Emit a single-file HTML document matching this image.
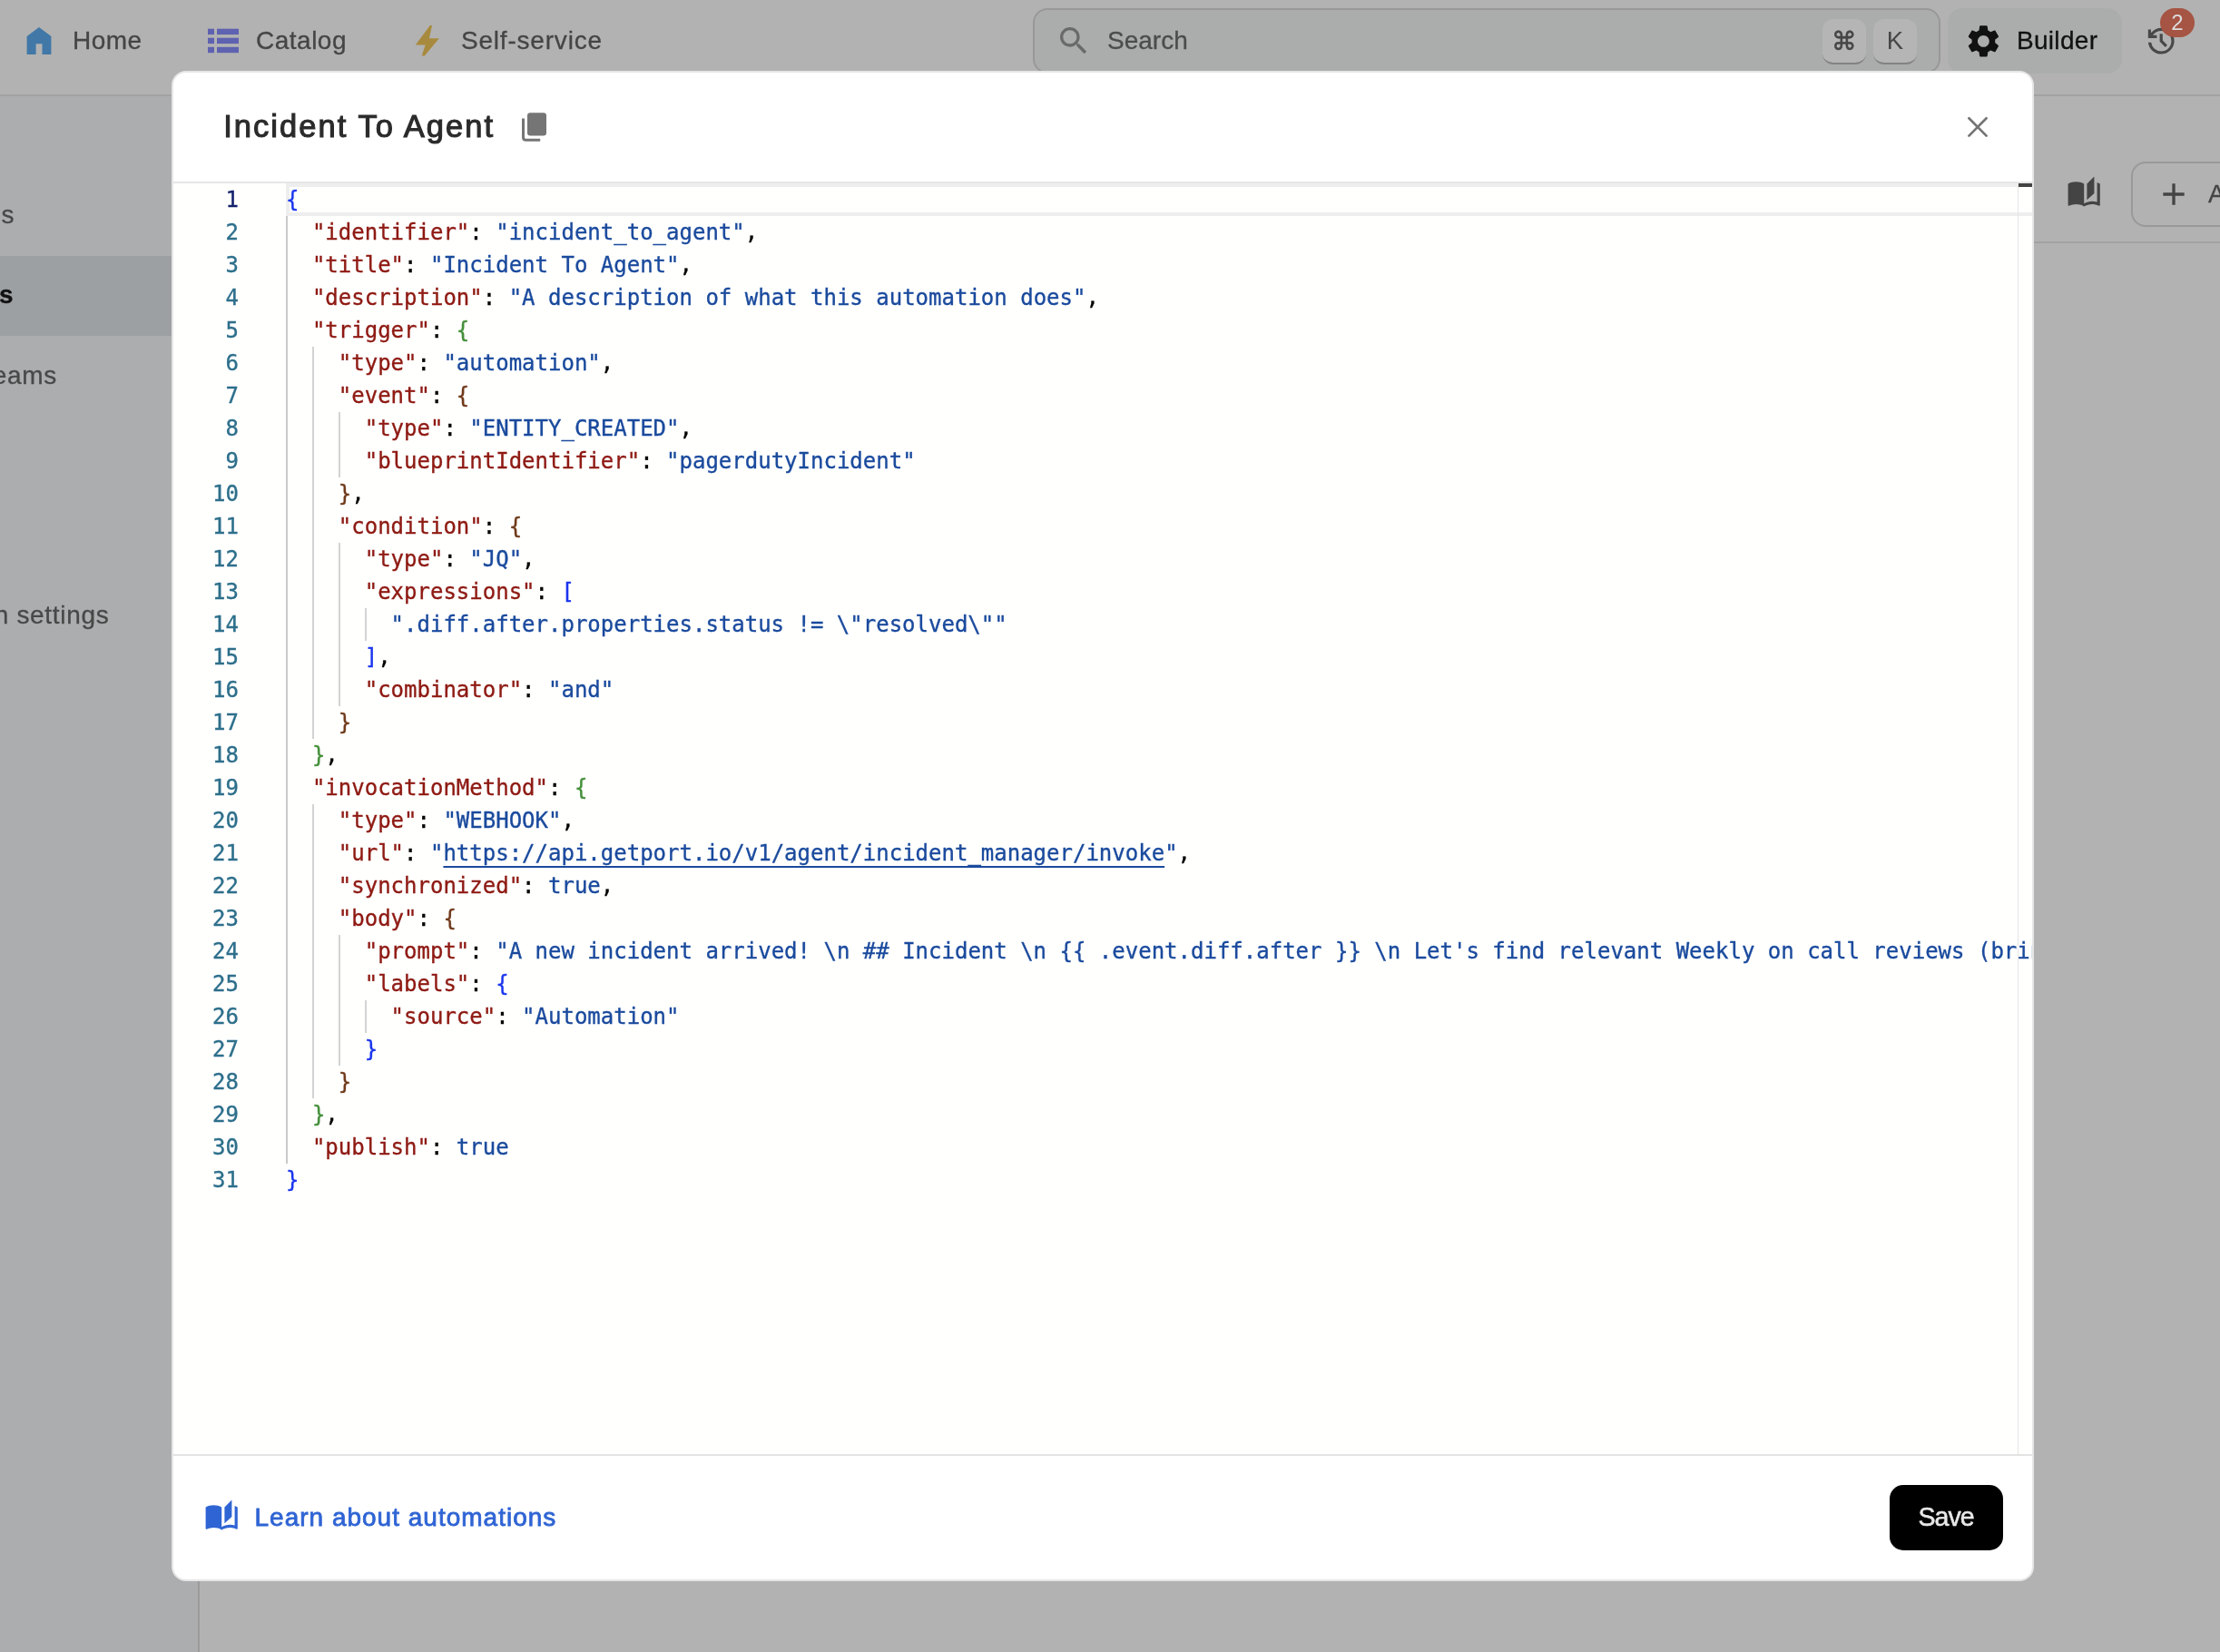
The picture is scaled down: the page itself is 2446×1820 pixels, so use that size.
<!DOCTYPE html>
<html lang="en">
<head>
<meta charset="utf-8">
<title>Incident To Agent</title>
<style>
*{box-sizing:border-box;margin:0;padding:0}
html,body{width:2446px;height:1820px;overflow:hidden;background:#b2b2b2}
body{position:relative;font-family:"Liberation Sans",sans-serif;color:#444}
.abs{position:absolute}
svg{position:absolute;overflow:visible}
/* ---------- top bar ---------- */
#topbar{left:0;top:0;width:2446px;height:104px;background:#b2b2b2}
#topline{left:0;top:104px;width:2446px;height:2px;background:#a2a2a2}
.nav{font-size:28px;line-height:32px;color:#454545;white-space:nowrap;-webkit-text-stroke:0.3px}
#search{left:1138px;top:9px;width:1000px;height:72px;border:2px solid #989898;border-radius:16px;background:#abadac}
.kbd{top:21px;width:48px;height:50px;border-radius:12px;background:#b5b5b5;border-bottom:2px solid #828282;font-size:27.5px;line-height:47px;text-align:center;color:#464646}
#builder{left:2146px;top:9px;width:192px;height:72px;border-radius:16px;background:#abadac}
#badge{left:2380px;top:9px;width:38px;height:32px;border-radius:16px;background:#a65443;color:#dcdcdc;font-size:24px;line-height:32px;text-align:center}
/* ---------- sidebar ---------- */
#sidebar{left:0;top:106px;width:218px;height:1714px;background:#acadaf}
#sideline{left:218px;top:106px;width:2px;height:1714px;background:#9b9b9b}
#sel{left:0;top:282px;width:218px;height:88px;background:#9da0a3}
.side{font-size:28px;line-height:32px;color:#484848;white-space:nowrap;letter-spacing:0.7px;-webkit-text-stroke:0.3px}
#subline{left:220px;top:266px;width:2226px;height:2px;background:#a2a2a2}
#addbtn{left:2348px;top:178px;width:200px;height:72px;border:2px solid #999;border-radius:16px}
/* ---------- modal ---------- */
#modal{left:189px;top:78px;width:2052px;height:1664px;background:#fff;border:2px solid #e6e6e6;border-radius:16px;overflow:hidden}
#title{left:55.2px;top:37px;font-size:34.5px;line-height:44px;color:#2b2b2b;white-space:nowrap;letter-spacing:2.05px;-webkit-text-stroke:1.1px #2b2b2b}
#hline{left:0;top:120px;width:2048px;height:2px;background:#e6e6e6}
#editor{left:0;top:122px;width:2048px;height:1400px;background:#fffffe;overflow:hidden;font-family:"DejaVu Sans Mono","Liberation Mono",monospace;font-size:24px;line-height:36px;-webkit-text-stroke:0.35px}
#curline{left:124px;top:0;width:1924px;height:36px;border-top:4px solid #eee;border-bottom:4px solid #eee;border-left:4px solid #eee}
#sbline{left:2032px;top:0;width:1px;height:1400px;background:#e6e6e6}
#ovr{left:2033px;top:0;width:15px;height:4px;background:#444}
.row{position:relative;height:36px;white-space:pre}
.ln{position:absolute;left:0;top:0;width:72px;text-align:right;color:#2d6f8b}
.ln.cur{color:#13216b}
.tx{position:absolute;left:124px;top:0}
.g{position:absolute;top:0;width:2px;height:36px;background:#d3d3d3}
.g0{left:124px;background:#c9c9c9}.g1{left:153px}.g2{left:182px}.g3{left:211px}
.k{color:#8e1a13}.s{color:#1a4a9d}.p{color:#000}.b1{color:#1a35ee}.b2{color:#45903a}.b3{color:#703a1a}
.u{color:#1a4a9d;text-decoration:underline;text-decoration-thickness:2px;text-underline-offset:5.6px;text-decoration-skip-ink:none}
#fline{left:0;top:1522px;width:2048px;height:2px;background:#e3e3e3}
#learn{left:89.5px;top:1575px;font-size:28px;line-height:34px;color:#2f64d4;white-space:nowrap;letter-spacing:1px;-webkit-text-stroke:0.8px #2f64d4}
#save{left:1891px;top:1556px;width:125px;height:72px;border-radius:15px;background:#000;color:#e9e9e9;font-size:28.6px;line-height:71px;text-align:center;letter-spacing:-1px;text-indent:-1px;-webkit-text-stroke:0.5px #e9e9e9}
</style>
</head>
<body>
<div id="wrap" style="position:absolute;left:0;top:0;width:2446px;height:1820px;will-change:transform">
<!-- top bar -->
<div id="topbar" class="abs"></div>
<div id="topline" class="abs"></div>
<svg style="left:0;top:0" width="700" height="104" viewBox="0 0 700 104">
  <path d="M43 30 L56.4 40 V60 H46.5 V48.2 H39.6 V60 H29.6 V40 Z" fill="#4178a8"/>
  <g fill="#5e62b0">
    <rect x="229" y="31.7" width="7" height="6.4"/><rect x="239" y="31.7" width="24" height="6.4"/>
    <rect x="229" y="41.7" width="7" height="6.4"/><rect x="239" y="41.7" width="24" height="6.4"/>
    <rect x="229" y="51.8" width="7" height="6.4"/><rect x="239" y="51.8" width="24" height="6.4"/>
  </g>
  <path d="M473.8 28 H476 L473 42.2 H483.9 L467.8 61.6 H464.7 L468.6 49.5 H457.8 Z" fill="#a88a3e"/>
</svg>
<div class="abs nav" style="left:80px;top:29px;letter-spacing:0.5px">Home</div>
<div class="abs nav" style="left:282px;top:29px;letter-spacing:0.5px">Catalog</div>
<div class="abs nav" style="left:508px;top:29px;letter-spacing:0.8px">Self-service</div>

<div id="search" class="abs"></div>
<svg style="left:1163px;top:25px" width="40" height="40" viewBox="0 0 24 24"><path fill="#6a6a6a" d="M15.5 14h-.79l-.28-.27C15.41 12.59 16 11.11 16 9.5 16 5.91 13.09 3 9.5 3S3 5.91 3 9.5 5.91 16 9.5 16c1.61 0 3.09-.59 4.23-1.57l.27.28v.79l5 4.99L20.49 19l-4.99-5zm-6 0C7.01 14 5 11.99 5 9.5S7.01 5 9.5 5 14 7.01 14 9.5 11.99 14 9.5 14z"/></svg>
<div class="abs nav" style="left:1220px;top:29px;color:#4c4c4c">Search</div>
<div class="abs kbd" style="left:2008px;font-family:'Liberation Sans','DejaVu Sans',sans-serif;font-size:28px;line-height:49px;-webkit-text-stroke:0.5px">⌘</div>
<div class="abs kbd" style="left:2064px">K</div>

<div id="builder" class="abs"></div>
<svg style="left:2163.9px;top:23.5px" width="42.8" height="42.8" viewBox="0 0 24 24"><path fill="#111" d="M19.14 12.94c.04-.3.06-.61.06-.94 0-.32-.02-.64-.07-.94l2.03-1.58c.18-.14.23-.41.12-.61l-1.92-3.32c-.12-.22-.37-.29-.59-.22l-2.39.96c-.5-.38-1.03-.7-1.62-.94l-.36-2.54c-.04-.24-.24-.41-.48-.41h-3.84c-.24 0-.43.17-.47.41l-.36 2.54c-.59.24-1.13.57-1.62.94l-2.39-.96c-.22-.08-.47 0-.59.22L2.74 8.87c-.12.21-.08.47.12.61l2.03 1.58c-.05.3-.09.63-.09.94s.02.64.07.94l-2.03 1.58c-.18.14-.23.41-.12.61l1.92 3.32c.12.22.37.29.59.22l2.39-.96c.5.38 1.03.7 1.62.94l.36 2.54c.05.24.24.41.48.41h3.84c.24 0 .44-.17.47-.41l.36-2.54c.59-.24 1.13-.56 1.62-.94l2.39.96c.22.08.47 0 .59-.22l1.92-3.32c.12-.22.07-.47-.12-.61l-2.01-1.58zM12 15.6c-1.98 0-3.6-1.62-3.6-3.6s1.62-3.6 3.6-3.6 3.6 1.62 3.6 3.6-1.62 3.6-3.6 3.6z"/></svg>
<div class="abs nav" style="left:2222px;top:29px;color:#111;letter-spacing:0.3px">Builder</div>
<svg style="left:2362.2px;top:26.2px" width="38.4" height="38.4" viewBox="0 0 24 24"><path fill="#484848" d="M12 21q-3.45 0-6.012-2.287T3.05 13H5.1q.35 2.6 2.313 4.3T12 19q2.925 0 4.963-2.037T19 12t-2.037-4.962T12 5q-1.725 0-3.225.8T6.25 8H9v2H3V4h2v2.35q1.275-1.6 3.113-2.475T12 3q1.875 0 3.513.713t2.85 1.924t1.925 2.85T21 12t-.712 3.513t-1.925 2.85t-2.85 1.925T12 21m2.8-4.8L11 12.400V7h2v4.600l3.200 3.200z"/></svg>
<div id="badge" class="abs">2</div>

<!-- sidebar + page -->
<div id="sidebar" class="abs"></div>
<div id="sel" class="abs"></div>
<div id="sideline" class="abs"></div>
<div id="subline" class="abs"></div>
<div class="abs side" style="right:2429.8px;top:220.75px">Data sources</div>
<div class="abs side" style="right:2430.6px;top:309px;font-weight:bold;color:#111">Automations</div>
<div class="abs side" style="right:2383.1px;top:397.5px">Users &amp; teams</div>
<div class="abs side" style="right:2325.5px;top:662.3px">Organization settings</div>
<svg style="left:2276.7px;top:193.4px" width="38.4" height="38.4" viewBox="0 0 24 24"><path fill="#444" d="M19 1l-5 5v11l5-4.500V1zM1 6v14.650c0 .25.25.5.5.5.1 0 .15-.05.25-.05C3.100 20.450 5.050 20 6.500 20c1.950 0 4.050.4 5.500 1.500V6c-1.450-1.100-3.550-1.500-5.500-1.500S2.450 4.900 1 6zm22 13.500V6c-.6-.45-1.250-.75-2-1v13.500c-1.100-.35-2.300-.5-3.500-.5-1.700 0-4.150.65-5.500 1.500v2c1.350-.85 3.800-1.500 5.500-1.500 1.650 0 3.350.3 4.750 1.050.1.050.15.050.25.050.25 0 .5-.25.5-.5v-1.100z"/></svg>
<div id="addbtn" class="abs"></div>
<svg style="left:2375px;top:194px" width="40" height="40" viewBox="0 0 24 24"><path fill="#444" d="M19 13h-6v6h-2v-6H5v-2h6V5h2v6h6v2z"/></svg>
<div class="abs nav" style="left:2433px;top:198px;color:#444">Automation</div>

<!-- modal -->
<div id="modal" class="abs">
  <div id="title" class="abs">Incident To Agent</div>
  <svg style="left:0;top:0" width="2048" height="120" viewBox="191 80 2048 120">
    <rect x="581" y="124.2" width="21" height="25.2" rx="3.2" fill="#757575"/>
    <path d="M576.5 130.4 V151.2 Q576.5 154.2 579.5 154.2 H595.2" fill="none" stroke="#757575" stroke-width="3"/>
    <path d="M2169.4 130.2 L2188.6 149.6 M2188.6 130.2 L2169.4 149.6" stroke="#757575" stroke-width="2.7" stroke-linecap="round" fill="none"/>
  </svg>
  <div id="hline" class="abs"></div>
  <div id="editor" class="abs">
    <div id="curline" class="abs"></div>
<div class="row"><span class="ln cur">1</span><span class="tx"><span class="b1">{</span></span></div>
<div class="row"><span class="ln">2</span><i class="g g0"></i><span class="tx">  <span class="k">"identifier"</span><span class="p">: </span><span class="s">"incident_to_agent"</span><span class="p">,</span></span></div>
<div class="row"><span class="ln">3</span><i class="g g0"></i><span class="tx">  <span class="k">"title"</span><span class="p">: </span><span class="s">"Incident To Agent"</span><span class="p">,</span></span></div>
<div class="row"><span class="ln">4</span><i class="g g0"></i><span class="tx">  <span class="k">"description"</span><span class="p">: </span><span class="s">"A description of what this automation does"</span><span class="p">,</span></span></div>
<div class="row"><span class="ln">5</span><i class="g g0"></i><span class="tx">  <span class="k">"trigger"</span><span class="p">: </span><span class="b2">{</span></span></div>
<div class="row"><span class="ln">6</span><i class="g g0"></i><i class="g g1"></i><span class="tx">    <span class="k">"type"</span><span class="p">: </span><span class="s">"automation"</span><span class="p">,</span></span></div>
<div class="row"><span class="ln">7</span><i class="g g0"></i><i class="g g1"></i><span class="tx">    <span class="k">"event"</span><span class="p">: </span><span class="b3">{</span></span></div>
<div class="row"><span class="ln">8</span><i class="g g0"></i><i class="g g1"></i><i class="g g2"></i><span class="tx">      <span class="k">"type"</span><span class="p">: </span><span class="s">"ENTITY_CREATED"</span><span class="p">,</span></span></div>
<div class="row"><span class="ln">9</span><i class="g g0"></i><i class="g g1"></i><i class="g g2"></i><span class="tx">      <span class="k">"blueprintIdentifier"</span><span class="p">: </span><span class="s">"pagerdutyIncident"</span></span></div>
<div class="row"><span class="ln">10</span><i class="g g0"></i><i class="g g1"></i><span class="tx">    <span class="b3">}</span><span class="p">,</span></span></div>
<div class="row"><span class="ln">11</span><i class="g g0"></i><i class="g g1"></i><span class="tx">    <span class="k">"condition"</span><span class="p">: </span><span class="b3">{</span></span></div>
<div class="row"><span class="ln">12</span><i class="g g0"></i><i class="g g1"></i><i class="g g2"></i><span class="tx">      <span class="k">"type"</span><span class="p">: </span><span class="s">"JQ"</span><span class="p">,</span></span></div>
<div class="row"><span class="ln">13</span><i class="g g0"></i><i class="g g1"></i><i class="g g2"></i><span class="tx">      <span class="k">"expressions"</span><span class="p">: </span><span class="b1">[</span></span></div>
<div class="row"><span class="ln">14</span><i class="g g0"></i><i class="g g1"></i><i class="g g2"></i><i class="g g3"></i><span class="tx">        <span class="s">".diff.after.properties.status != \"resolved\""</span></span></div>
<div class="row"><span class="ln">15</span><i class="g g0"></i><i class="g g1"></i><i class="g g2"></i><span class="tx">      <span class="b1">]</span><span class="p">,</span></span></div>
<div class="row"><span class="ln">16</span><i class="g g0"></i><i class="g g1"></i><i class="g g2"></i><span class="tx">      <span class="k">"combinator"</span><span class="p">: </span><span class="s">"and"</span></span></div>
<div class="row"><span class="ln">17</span><i class="g g0"></i><i class="g g1"></i><span class="tx">    <span class="b3">}</span></span></div>
<div class="row"><span class="ln">18</span><i class="g g0"></i><span class="tx">  <span class="b2">}</span><span class="p">,</span></span></div>
<div class="row"><span class="ln">19</span><i class="g g0"></i><span class="tx">  <span class="k">"invocationMethod"</span><span class="p">: </span><span class="b2">{</span></span></div>
<div class="row"><span class="ln">20</span><i class="g g0"></i><i class="g g1"></i><span class="tx">    <span class="k">"type"</span><span class="p">: </span><span class="s">"WEBHOOK"</span><span class="p">,</span></span></div>
<div class="row"><span class="ln">21</span><i class="g g0"></i><i class="g g1"></i><span class="tx">    <span class="k">"url"</span><span class="p">: </span><span class="s">"</span><span class="u">https://api.getport.io/v1/agent/incident_manager/invoke</span><span class="s">"</span><span class="p">,</span></span></div>
<div class="row"><span class="ln">22</span><i class="g g0"></i><i class="g g1"></i><span class="tx">    <span class="k">"synchronized"</span><span class="p">: </span><span class="s">true</span><span class="p">,</span></span></div>
<div class="row"><span class="ln">23</span><i class="g g0"></i><i class="g g1"></i><span class="tx">    <span class="k">"body"</span><span class="p">: </span><span class="b3">{</span></span></div>
<div class="row"><span class="ln">24</span><i class="g g0"></i><i class="g g1"></i><i class="g g2"></i><span class="tx">      <span class="k">"prompt"</span><span class="p">: </span><span class="s">"A new incident arrived! \n ## Incident \n {{ .event.diff.after }} \n Let's find relevant Weekly on call reviews (bring the last 3 weeks)</span></span></div>
<div class="row"><span class="ln">25</span><i class="g g0"></i><i class="g g1"></i><i class="g g2"></i><span class="tx">      <span class="k">"labels"</span><span class="p">: </span><span class="b1">{</span></span></div>
<div class="row"><span class="ln">26</span><i class="g g0"></i><i class="g g1"></i><i class="g g2"></i><i class="g g3"></i><span class="tx">        <span class="k">"source"</span><span class="p">: </span><span class="s">"Automation"</span></span></div>
<div class="row"><span class="ln">27</span><i class="g g0"></i><i class="g g1"></i><i class="g g2"></i><span class="tx">      <span class="b1">}</span></span></div>
<div class="row"><span class="ln">28</span><i class="g g0"></i><i class="g g1"></i><span class="tx">    <span class="b3">}</span></span></div>
<div class="row"><span class="ln">29</span><i class="g g0"></i><span class="tx">  <span class="b2">}</span><span class="p">,</span></span></div>
<div class="row"><span class="ln">30</span><i class="g g0"></i><span class="tx">  <span class="k">"publish"</span><span class="p">: </span><span class="s">true</span></span></div>
<div class="row"><span class="ln">31</span><span class="tx"><span class="b1">}</span></span></div>
    <div id="sbline" class="abs"></div>
    <div id="ovr" class="abs"></div>
  </div>
  <div id="fline" class="abs"></div>
  <svg style="left:33.7px;top:1570.6px" width="38.4" height="38.4" viewBox="0 0 24 24"><path fill="#2f64d4" d="M19 1l-5 5v11l5-4.500V1zM1 6v14.650c0 .25.25.5.5.5.1 0 .15-.05.25-.05C3.100 20.450 5.050 20 6.500 20c1.950 0 4.050.4 5.500 1.500V6c-1.450-1.100-3.550-1.500-5.500-1.500S2.450 4.900 1 6zm22 13.500V6c-.6-.45-1.250-.75-2-1v13.500c-1.100-.35-2.300-.5-3.500-.5-1.700 0-4.150.65-5.500 1.500v2c1.350-.85 3.800-1.500 5.500-1.500 1.650 0 3.350.3 4.750 1.050.1.050.15.050.25.050.25 0 .5-.25.5-.5v-1.100z"/></svg>
  <div id="learn" class="abs">Learn about automations</div>
  <div id="save" class="abs">Save</div>
</div>
</div>
</body>
</html>
